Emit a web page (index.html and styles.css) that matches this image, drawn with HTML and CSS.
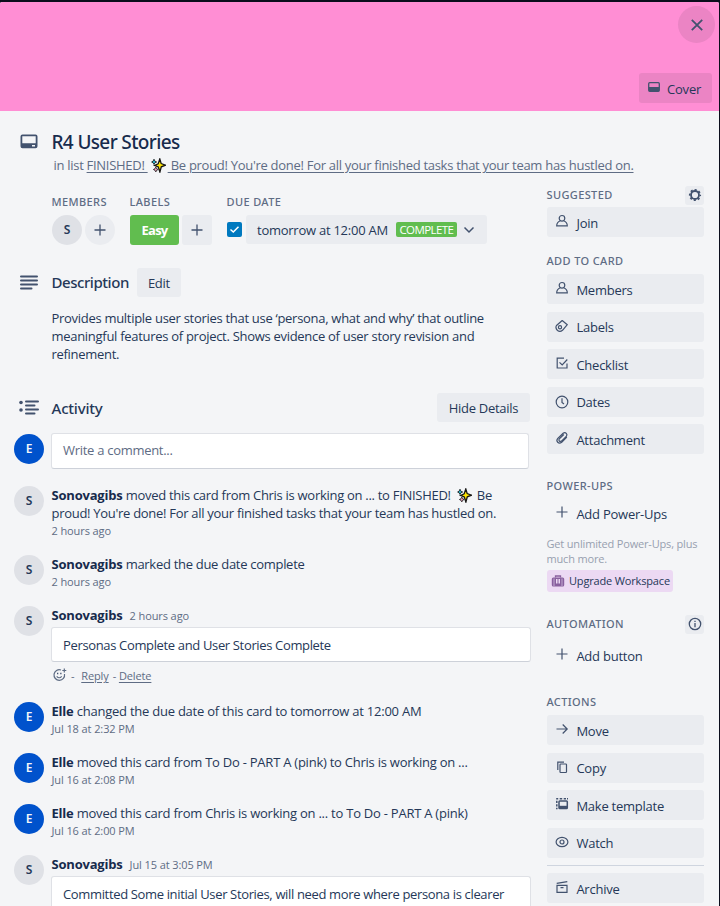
FILE: index.html
```
<!DOCTYPE html>
<html lang="en">
<head>
<meta charset="utf-8">
<title>R4 User Stories</title>
<link rel="stylesheet" href="styles.css">
</head>
<body>
<svg class="defs" width="0" height="0">
  <symbol id="sparkles" viewBox="0 0 15 15">
    <path d="M8.800 1 10.200 5.600 14.600 7.200 10.300 8.800 8.900 14 7.300 9 3.600 7.400 7.200 5.800Z" fill="#ffe600" stroke="#171717" stroke-width="1.300"/>
    <path d="M3 1.200 3.900 3.200 5.700 4 3.900 4.800 3 6.500 2.100 4.800 .6 4 2.100 3.200Z" fill="#26b9d4" stroke="#171717" stroke-width=".8"/>
    <path d="M4.800 9.100 5.600 10.700 7.200 11.500 5.600 12.300 4.800 13.900 4 12.300 2.400 11.500 4 10.700Z" fill="#f29ab8" stroke="#171717" stroke-width=".8"/>
  </symbol>
  <symbol id="person" viewBox="0 0 14 14">
    <circle cx="7" cy="4.300" r="2.800"/><path d="M5.300 6.800C2.800 7.700 1.700 9.300 1.700 11.900H12.300C12.300 9.300 11.200 7.700 8.700 6.800"/>
  </symbol>
  <symbol id="plus" viewBox="0 0 14 14"><path d="M7 1.500V12.500M1.500 7H12.500"/></symbol>
</svg>
<div class="card">
  <header class="cover">
    <button class="close" aria-label="Close"><svg width="14" height="14" viewBox="0 0 14 14"><path d="M1.800 1.800 12.200 12.200M12.200 1.800 1.800 12.200"/></svg></button>
    <button class="cover-btn"><svg width="12" height="10" viewBox="0 0 12 10"><rect x=".7" y=".7" width="10.600" height="8.600" rx="1"/><path class="solid" d="M1 5H11V9H1Z"/></svg>Cover</button>
  </header>
  <div class="body">
    <main class="main">
      <section class="title-row">
        <span class="gutter"><svg width="18" height="15" viewBox="0 0 18 15"><path class="solid" fill-rule="evenodd" d="M2.500 .500H15.500A2 2 0 0 1 17.500 2.500V12.300A2 2 0 0 1 15.500 14.300H2.500A2 2 0 0 1 .500 12.300V2.500A2 2 0 0 1 2.500 .500ZM2.300 2.300V9.300H15.700V2.300ZM12 11V12.600H15V11Z"/></svg></span>
        <div>
          <h1>R4 User Stories</h1>
          <p class="in-list">in list <a>FINISHED! <svg class="sparkle" width="15" height="15"><use href="#sparkles"/></svg> Be proud! You're done! For all your finished tasks that your team has hustled on.</a></p>
        </div>
      </section>
      <section class="details">
        <div class="detail members">
          <h3>MEMBERS</h3>
          <div class="detail-row"><span class="avatar grey">S</span><span class="avatar add"><svg width="14" height="14"><use href="#plus"/></svg></span></div>
        </div>
        <div class="detail labels">
          <h3>LABELS</h3>
          <div class="detail-row"><span class="label">Easy</span><span class="square"><svg width="14" height="14"><use href="#plus"/></svg></span></div>
        </div>
        <div class="detail">
          <h3>DUE DATE</h3>
          <div class="detail-row due"><span class="check"><svg width="15" height="15" viewBox="0 0 15 15"><path d="M3.500 7.500 6.300 10 11.500 4.700"/></svg></span><span class="date">tomorrow at 12:00 AM<b class="complete">COMPLETE</b><svg width="12" height="8" viewBox="0 0 12 8"><path d="M1.500 1.500 6 6 10.500 1.500"/></svg></span></div>
        </div>
      </section>
      <section class="heading desc-head">
        <span class="gutter"><svg width="18" height="15" viewBox="0 0 18 15"><path class="thick" d="M1 1.500H17M1 5.500H17M1 9.500H17M1 13.500H11.500"/></svg></span>
        <h2>Description</h2><button class="btn edit">Edit</button>
      </section>
      <p class="desc">Provides multiple user stories that use ‘persona, what and why’ that outline<br>meaningful features of project. Shows evidence of user story revision and<br>refinement.</p>
      <section class="heading act-head">
        <span class="gutter"><svg width="20" height="15" viewBox="0 0 20 15"><circle class="solid" cx="2" cy="2.500" r="1.800"/><circle class="solid" cx="2" cy="10" r="1.800"/><path class="thick" d="M7 1.500H19M7 5.500H15.500M7 9.500H19M7 13.500H15.500"/></svg></span>
        <h2>Activity</h2><button class="btn hide">Hide Details</button>
      </section>
      <div class="compose"><span class="avatar blue">E</span><div class="input">Write a comment...</div></div>

      <article class="entry"><span class="avatar grey">S</span><div class="content"><p><b>Sonovagibs</b> moved this card from Chris is working on ... to FINISHED! <svg class="sparkle" width="15" height="15"><use href="#sparkles"/></svg> Be<br>proud! You're done! For all your finished tasks that your team has hustled on.</p><time>2 hours ago</time></div></article>
      <article class="entry"><span class="avatar grey">S</span><div class="content"><p><b>Sonovagibs</b> marked the due date complete</p><time>2 hours ago</time></div></article>
      <article class="entry"><span class="avatar grey">S</span><div class="content"><p><b>Sonovagibs</b><time class="inline">2 hours ago</time></p><div class="comment">Personas Complete and User Stories Complete</div>
        <div class="reply"><svg width="14" height="14" viewBox="0 0 14 14"><path d="M8 2A5.300 5.300 0 1 0 11.500 6M11.300 .500V4.500M9.300 2.500H13.300M3.700 8.300Q6.200 11.200 8.700 8.300"/><path class="solid" d="M4 4.800H5.300V6.300H4ZM7.200 4.800H8.500V6.300H7.200Z"/></svg><span>-</span><a>Reply</a><span>-</span><a>Delete</a></div></div></article>
      <article class="entry moved"><span class="avatar blue">E</span><div class="content"><p><b>Elle</b> changed the due date of this card to tomorrow at 12:00 AM</p><time>Jul 18 at 2:32 PM</time></div></article>
      <article class="entry moved"><span class="avatar blue">E</span><div class="content"><p><b>Elle</b> moved this card from To Do - PART A (pink) to Chris is working on ...</p><time>Jul 16 at 2:08 PM</time></div></article>
      <article class="entry moved"><span class="avatar blue">E</span><div class="content"><p><b>Elle</b> moved this card from Chris is working on ... to To Do - PART A (pink)</p><time>Jul 16 at 2:00 PM</time></div></article>
      <article class="entry"><span class="avatar grey">S</span><div class="content"><p><b>Sonovagibs</b><time class="inline">Jul 15 at 3:05 PM</time></p><div class="comment">Committed Some initial User Stories, will need more where persona is clearer</div></div></article>
    </main>

    <aside class="side">
      <section class="suggested">
        <h3>SUGGESTED<span class="mini"><svg width="14" height="14" viewBox="0 0 14 14"><circle cx="7" cy="7" r="4" stroke-width="1.800"/><circle cx="7" cy="7" r="5.300" stroke-width="1.600" stroke-dasharray="2.100 2.062" stroke-dashoffset="1.050"/></svg></span></h3>
        <button class="item"><svg width="14" height="14"><use href="#person"/></svg>Join</button>
      </section>
      <section class="add">
        <h3>ADD TO CARD</h3>
        <button class="item"><svg width="14" height="14"><use href="#person"/></svg>Members</button>
        <button class="item raised"><svg width="14" height="14" viewBox="0 0 14 14"><path d="M7.200 1.500 12.300 5.700 7.500 11.300Q5 13.300 2.500 11.500 0 9 1.500 6.500Z" stroke-linejoin="round"/><circle cx="5" cy="8.300" r="1.600"/></svg>Labels</button>
        <button class="item"><svg width="14" height="14" viewBox="0 0 14 14"><path d="M9 2.200H2.200V12H12V7.500M4.500 6.300 7.200 9 12.300 3.500"/></svg>Checklist</button>
        <button class="item up"><svg width="14" height="14" viewBox="0 0 14 14"><circle cx="7" cy="7" r="5.800"/><path d="M7 3.300V7.500L9 9"/></svg>Dates</button>
        <button class="item"><svg width="14" height="14" viewBox="0 0 14 14"><path d="M11.800 6 6.700 11.200Q4.500 13 2.700 11.300 1 9.500 2.800 7.400L8.100 2.200Q9.900 1 11.300 2.400 12.600 3.800 11.300 5.500L6.500 10.100Q5.200 10.900 4.300 10 3.400 9.100 4.300 7.900L8.800 3.500" stroke-width="1.200"/></svg>Attachment</button>
      </section>
      <section class="power">
        <h3>POWER-UPS</h3>
        <button class="item bare"><svg width="14" height="14"><use href="#plus"/></svg>Add Power-Ups</button>
        <p class="note">Get unlimited Power-Ups, plus<br>much more.</p>
        <button class="upgrade"><svg width="14" height="12" viewBox="0 0 14 12"><rect class="case" x=".800" y="2.500" width="12.400" height="9" rx="1.500"/><path d="M4.500 2.500V1H9.500V2.500"/><path class="light" d="M5 4H6.500V8.500H5ZM7.500 4H9V8.500H7.500ZM2.700 3.500H3.300V11H2.700ZM10.700 3.500H11.300V11H10.700Z"/></svg>Upgrade Workspace</button>
      </section>
      <section class="auto">
        <h3>AUTOMATION<span class="mini"><svg width="14" height="14" viewBox="0 0 14 14"><circle cx="7" cy="7" r="5.700"/><path d="M7 6V10.300M7 3.700V5"/></svg></span></h3>
        <button class="item bare"><svg width="14" height="14"><use href="#plus"/></svg>Add button</button>
      </section>
      <section class="actions">
        <h3>ACTIONS</h3>
        <button class="item"><svg width="14" height="14" viewBox="0 0 14 14"><path d="M1.500 7H12M7.700 2.500 12.200 7 7.700 11.500"/></svg>Move</button>
        <button class="item raised"><svg width="14" height="14" viewBox="0 0 14 14"><rect x="5" y="4" width="6.500" height="8.500" rx=".8"/><path d="M2.800 10V2.200H9"/></svg>Copy</button>
        <button class="item"><svg width="14" height="14" viewBox="0 0 14 14"><rect x="4" y="4" width="8.300" height="7.500" rx=".8" stroke-width="1.500"/><path class="solid" d="M4 8.800H12V12H4Z"/><path d="M1.200 1.800H3.200M4.700 1.800H7.200M8.700 1.800H11M12 1.800H13M1.800 3.800V6M1.800 7.300V9.500M1.800 10.700V12.300" stroke-width="1.500"/></svg>Make template</button>
        <button class="item raised"><svg width="14" height="14" viewBox="0 0 14 14"><ellipse cx="7" cy="7" rx="5.900" ry="4.700"/><circle cx="7" cy="7" r="2"/></svg>Watch</button>
        <hr>
        <button class="item"><svg width="14" height="14" viewBox="0 0 14 14"><path d="M2 5.300H12V12.300H2ZM1.700 3.300 12.300 1.700M5.500 7.700H8.500"/></svg>Archive</button>
      </section>
    </aside>
  </div>
</div>
</body>
</html>
```
FILE: styles.css
```
* { box-sizing: border-box; margin: 0; padding: 0; }
html, body { height: 906px; overflow: hidden; }
body {
  background: #0b0d1c;
  padding: 2px 1px 0 0;
  font: 13px/18px "Open Sans", "Noto Sans", sans-serif;
  letter-spacing: -.29px;
  color: #253858;
}
button { border: 0; font: inherit; letter-spacing: inherit; color: inherit; }
svg { fill: none; stroke: #42526e; stroke-width: 1.3; flex: none; }
svg .solid { fill: #42526e; stroke: none; }
svg .thick { stroke-width: 2; stroke-linecap: round; }
.defs { position: absolute; }
.card { height: 904px; background: #f4f5f7; border-radius: 2px 2px 0 0; overflow: hidden; }

.cover {
  height: 109px; background: #ff8ed4; padding: 4px 4px 0 0;
  display: flex; flex-direction: column; align-items: flex-end;
}
.close { width: 37px; height: 37px; border-radius: 50%; background: #eb84c4; display: grid; place-items: center; }
.close svg { stroke-width: 1.8; }
.cover-btn {
  width: 73px; height: 30px; margin: 30px 3px 0 0; padding: 2px 0 0 9px;
  border-radius: 3px; background: #eb84c4; display: flex; align-items: center; gap: 7px; letter-spacing: -.2px;
}
.cover-btn svg { margin-top: -4px; }

.body { display: flex; }
.main { width: 546.5px; padding: 20px 0 0 14px; }
.side { width: 157.5px; }

.gutter { width: 30px; display: grid; place-items: center; flex: none; }
.title-row { display: grid; grid-template-columns: 30px 1fr; column-gap: 7.5px; }
.title-row .gutter { height: 20px; }
h1 { font: 500 19px/22px "Noto Sans", sans-serif; letter-spacing: -.64px; margin-top: -.5px; color: #172b4d; }
.in-list { margin: 3.5px 0 1px 2px; color: #5e6c84; white-space: nowrap; }
a { text-decoration: underline; text-underline-offset: 2px; }
.sparkle { stroke: none; margin: 0 2px 0 3px; vertical-align: -3px; }
.in-list .sparkle { margin: 0 2px 0 3px; }
h3 { font: 500 11px/16px "Noto Sans", sans-serif; letter-spacing: .38px; color: #5e6c84; }

.details { display: flex; margin: 19px 0 0 38px; }
.detail h3 { margin: 0 0 5px -.5px; }
.members { width: 78px; }
.labels { width: 97px; }
.detail-row { display: flex; gap: 3px; height: 30px; }
.labels .square { margin-left: 0; }
.avatar {
  width: 30px; height: 30px; border-radius: 50%; flex: none;
  display: grid; place-items: center; font: 600 12px/16px "Noto Sans", sans-serif;
}
.grey { background: #dfe1e6; }
.blue { background: #0052cc; color: #f4f5f7; }
.add, .square { background: #eaecf0; }
.square { width: 30px; display: grid; place-items: center; border-radius: 3px; flex: none; }
.label {
  width: 49px; border-radius: 3px; background: #61bd4f; color: #fff; flex: none;
  font-weight: 700; line-height: 30px; text-align: center; letter-spacing: -.75px;
}
.due { gap: 4px; }
.check { width: 15px; height: 15px; margin-top: 7px; background: #0079bf; border-radius: 2px; }
.check svg { display: block; stroke: #fff; stroke-width: 1.5; }
.date {
  width: 241px; height: 29px; padding-left: 11px; border-radius: 3px; background: #eaecf0;
  display: flex; align-items: center; letter-spacing: -.25px;
}
.complete {
  width: 61px; height: 15px; margin: 0 6px 0 8px; border-radius: 2px; background: #61bd4f; color: #fff;
  font-weight: 400; font-size: 11.5px; line-height: 15px; letter-spacing: -.57px; text-align: center;
}
.date svg { stroke-width: 1.5; }

.heading { display: flex; align-items: center; height: 29px; }
h2 { font: 500 15px/20px "Noto Sans", sans-serif; letter-spacing: -.45px; margin: -1px 0 0 7.5px; }
.act-head h2 { letter-spacing: -.2px; margin-top: 0; }
.desc-head { margin-top: 23px; }
.btn { height: 29px; border-radius: 3px; background: #eaecf0; }
.edit { width: 44px; margin-left: 8px; }
.hide { width: 93px; margin: 0 16.5px 0 auto; }
.desc { margin: 12px 0 0 37.5px; white-space: nowrap; }
.act-head { margin-top: 30px; }

.compose { display: flex; gap: 7px; margin: 11px 0 17px; }
.compose .avatar { margin-top: 1px; }
.input, .comment { border: 1px solid #dfe1e6; border-bottom-color: #cdd1d9; border-radius: 3px; background: #fff; padding-left: 11px; white-space: nowrap; }
.input { width: 478px; height: 36px; line-height: 33px; color: #5e6c84; }
.entry { display: flex; gap: 7px; margin-bottom: 15px; }
.content { width: 480px; flex: none; }
.content p { white-space: nowrap; }
.content > p, .content > time { margin-left: .5px; }
.content b { letter-spacing: -.2px; color: #172b4d; }
.moved p { letter-spacing: -.24px; }
time { display: block; font-size: 11px; letter-spacing: -.1px; color: #5e6c84; }
time.inline { display: inline; margin-left: 7px; }
.comment { margin-top: 2px; height: 35px; line-height: 34px; letter-spacing: -.35px; }
.reply { display: flex; height: 25px; align-items: center; padding: 3px 0 0 2px; font-size: 11px; color: #5e6c84; }
.reply svg { margin: -3px 4px 0 0; stroke: #5e6c84; stroke-width: 1.2; }
.reply a { margin: 0 4px 0 7px; letter-spacing: -.12px; }
.reply span + a + span + a { margin-left: 3px; }

.side h3 { display: flex; align-items: center; height: 20px; }
.mini { width: 19px; height: 19px; margin-left: auto; border-radius: 3px; background: #eaecf0; display: grid; place-items: center; }
.suggested { padding-top: 74px; height: 140px; }
.suggested .item { margin-top: 2px; }
.item {
  width: 157px; height: 30px; margin: 0 0 7.5px .5px; padding: 2px 0 0 8px; border-radius: 3px;
  background: #eaecf0; display: flex; align-items: center; gap: 7.4px; letter-spacing: -.24px;
}
.item svg { margin-top: -4px; stroke-width: 1.2; }
.raised { padding-top: 1px; }
.raised svg { margin-top: -3px; }
.up { padding-top: 0; }
.up svg { margin-top: 0; }
.bare { background: none; }
.side .add { background: none; height: 225px; }
.side .add h3 { margin-bottom: 3px; }
.power { height: 138px; }
.power .item { margin: 2px 0 8px .5px; }
.note { font-size: 11px; line-height: 15px; letter-spacing: -.17px; color: #97a0af; white-space: nowrap; }
.upgrade {
  width: 126px; height: 22px; margin: 4px 0 0 .5px; padding-left: 4px; border-radius: 3px; background: #ecd9f3;
  display: flex; align-items: center; gap: 4px; font-size: 11px; letter-spacing: -.16px;
}
.upgrade svg { stroke: #89609e; }
.upgrade .case { fill: #89609e; stroke: none; }
.upgrade .light { fill: #ecd9f3; stroke: none; }
.auto { height: 78px; }
.auto .item { margin-top: 6px; }
.actions h3 { margin-bottom: 3px; }
.actions hr { border: 0; height: 1px; margin: 0 0 7px .5px; background: #cfd5df; }
```
